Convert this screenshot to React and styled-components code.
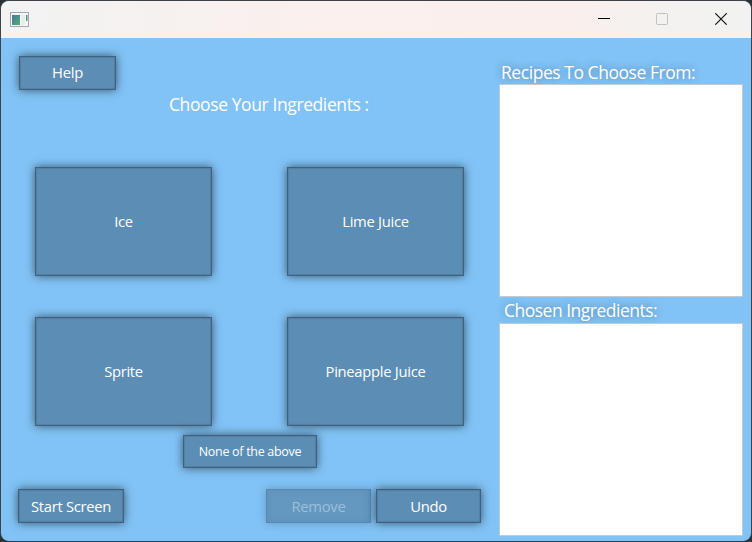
import React from "react";
import styled, { createGlobalStyle } from "styled-components";

const GlobalStyle = createGlobalStyle`
  *, *::before, *::after { box-sizing: border-box; }
  html, body { margin: 0; width: 752px; height: 542px; overflow: hidden; background: #2c3034; }
`;

const Window = styled.div`
  width: 752px;
  height: 542px;
  border: 1px solid #3f4347;
  border-bottom-color: #2d4050;
  border-radius: 9px;
  overflow: hidden;
  background: #81c3f6;
  color: #fff;
  font-family: "Open Sans", "Noto Sans", sans-serif;
  display: flex;
  flex-direction: column;
`;

const TitleBar = styled.header`
  height: 37px;
  flex: none;
  display: flex;
  align-items: center;
  justify-content: space-between;
  padding: 0 24px 0 9px;
  background: linear-gradient(100deg, #f2f3f3 0%, #f4f2f1 12%, #faf0ed 40%, #faefec 75%, #f3f2f0 90%, #f2f2f1 100%);
`;

const AppIcon = styled.svg`
  display: block;
  margin-top: -1px;
`;

const Controls = styled.div`
  display: grid;
  grid-template-columns: 58px 59px 12px;
  align-items: center;

  svg { display: block; margin-top: -1px; }
`;

const Body = styled.main`
  flex: 1;
  display: flex;
  min-height: 0;
`;

const Picker = styled.section`
  width: 498px;
  flex: none;
  display: flex;
  flex-direction: column;
  align-items: flex-start;
  padding: 18px 0 0 17px;
`;

const Button = styled.button`
  width: ${(p) => p.$w}px;
  height: ${(p) => p.$h}px;
  flex: none;
  padding: 0 0 ${(p) => p.$lift ?? 2}px;
  border: 1px solid #40617e;
  box-shadow: 0 0 9px rgba(0, 0, 0, 0.58), inset 0 0 1px 1px rgba(64, 97, 126, 0.3);
  background: #5c8db4;
  color: #fff;
  font-family: inherit;
  font-size: ${(p) => p.$size || 14.8}px;
  letter-spacing: ${(p) => p.$track ?? -0.3}px;
  line-height: 20px;
  white-space: nowrap;

  &:disabled {
    border-color: #5389b3;
    background: #6598c1;
    color: #9bbfdb;
    box-shadow: 0 0 9px rgba(0, 0, 0, 0.23), inset 0 0 7px rgba(60, 105, 145, 0.18);
  }
`;

const HelpRow = styled.div`
  padding-left: 1px;
  height: 34px;
  display: flex;
`;

const Heading = styled.h1`
  margin: 1px 0 0 151px;
  font-size: 17.5px;
  line-height: 26px;
  font-weight: 400;
  letter-spacing: ${(p) => p.$track || 0}px;
  white-space: nowrap;
`;

const Ingredients = styled.div`
  margin: 50px 0 0 17px;
  display: grid;
  grid-template-columns: 177px 178px;
  gap: 41px 75px;
`;

const NoneRow = styled.div`
  margin: 9px 0 0 165px;
  display: flex;
`;

const Footer = styled.footer`
  width: 463px;
  margin-top: 21px;
  display: flex;
  gap: 5px;
`;

const Spacer = styled.div`
  flex: 1;
`;

const Lists = styled.aside`
  width: 244px;
  display: flex;
  flex-direction: column;
  padding-top: 22px;
`;

const ListTitle = styled.h2`
  margin: 0;
  padding-left: ${(p) => p.$indent}px;
  height: ${(p) => p.$h}px;
  font-size: 17.5px;
  line-height: ${(p) => p.$line || 26}px;
  font-weight: 400;
  letter-spacing: ${(p) => p.$track || 0}px;
  text-shadow: 0 0 9px rgba(0, 0, 0, 0.4);
  white-space: nowrap;
`;

const ListBox = styled.div`
  height: 213px;
  border: 1px solid #c5cbcf;
  background: #fff;
`;

const choices = ["Ice", "Lime Juice", "Sprite", "Pineapple Juice"];

export default function App() {
  return (
    <>
      <GlobalStyle />
      <Window>
        <TitleBar>
          <AppIcon width="19" height="15" viewBox="0 0 19 15">
            <defs>
              <linearGradient id="pane" x1="0" y1="0" x2="1" y2="1">
                <stop offset="0" stopColor="#4779a5" />
                <stop offset="1" stopColor="#52ad68" />
              </linearGradient>
            </defs>
            <rect x="0.5" y="0.5" width="18" height="14" fill="#f7f9fa" stroke="#a2a8ad" />
            <rect x="2" y="3" width="8" height="10" fill="url(#pane)" />
            <rect x="11" y="3" width="4" height="10" fill="#e9edef" />
            <rect x="16" y="3" width="1.5" height="6" fill="url(#pane)" />
          </AppIcon>
          <Controls>
            <svg width="12" height="12" viewBox="0 0 12 12">
              <path d="M0 5.5H12" stroke="#000" />
            </svg>
            <svg width="12" height="12" viewBox="0 0 12 12">
              <rect x="0.5" y="0.5" width="11" height="11" rx="1" fill="none" stroke="#c5c0bf" />
            </svg>
            <svg width="12" height="12" viewBox="0 0 12 12">
              <path d="M.3 .3L11.7 11.7M11.7 .3L.3 11.7" stroke="#111" strokeWidth="1.15" />
            </svg>
          </Controls>
        </TitleBar>
        <Body>
          <Picker>
            <HelpRow>
              <Button $w={97} $h={34}>Help</Button>
            </HelpRow>
            <Heading $track={-0.4}>Choose Your Ingredients :</Heading>
            <Ingredients>
              {choices.map((name) => (
                <Button key={name} $w={177} $h={109}>{name}</Button>
              ))}
            </Ingredients>
            <NoneRow>
              <Button $w={134} $h={33} $size={12.5} $track={-0.3} $lift={0}>None of the above</Button>
            </NoneRow>
            <Footer>
              <Button $w={106} $h={34} $lift={0}>Start Screen</Button>
              <Spacer />
              <Button $w={105} $h={34} $lift={0} disabled>Remove</Button>
              <Button $w={105} $h={34} $lift={0}>Undo</Button>
            </Footer>
          </Picker>
          <Lists>
            <ListTitle $indent={2} $h={24} $line={24} $track={-0.45}>Recipes To Choose From:</ListTitle>
            <ListBox />
            <ListTitle $indent={5} $h={26} $track={-0.5}>Chosen Ingredients:</ListTitle>
            <ListBox />
          </Lists>
        </Body>
      </Window>
    </>
  );
}
